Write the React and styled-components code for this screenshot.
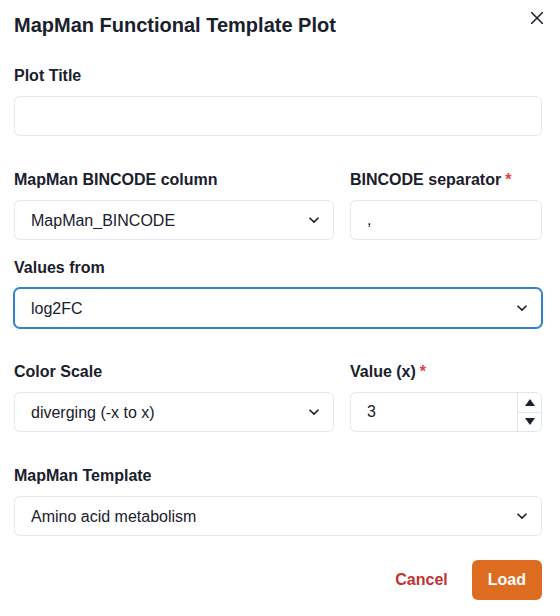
import styled, { createGlobalStyle } from "styled-components";

const GlobalStyle = createGlobalStyle`
  body {
    margin: 0;
    background: #ffffff;
    font-family: "Liberation Sans", Arial, sans-serif;
    color: #1a202c;
  }
  * { box-sizing: border-box; }
`

const Dialog = styled.div`
  position: relative;
  width: 560px;
  padding: 13px 18px 16px 14px;
  background: #ffffff;
`
const Title = styled.h2`
  margin: 0;
  font-size: 20px;
  line-height: 24px;
  font-weight: 700;
  color: #1a202c;
`
const CloseButton = styled.button`
  position: absolute;
  top: 2px;
  right: 7px;
  width: 32px;
  height: 32px;
  display: flex;
  align-items: center;
  justify-content: center;
  border: none;
  background: transparent;
  color: #1a202c;
  padding: 0;
  cursor: pointer;
`
const Form = styled.div`
  display: flex;
  flex-direction: column;
  margin-top: 27px;
`
const Field = styled.div`
  display: flex;
  flex-direction: column;
  margin-top: ${(p) => p.$mt || 0}px;
`
const Row = styled.div`
  display: grid;
  grid-template-columns: 5fr 3fr;
  gap: 16px;
  margin-top: ${(p) => p.$mt || 0}px;
`
const Label = styled.label`
  display: flex;
  font-size: 16px;
  line-height: 24px;
  font-weight: 700;
  margin-bottom: 8px;
  color: #1a202c;
`
const Required = styled.span`
  color: #e53e3e;
  margin-left: 4px;
`
const Input = styled.input`
  width: 100%;
  height: 40px;
  padding: 0 16px;
  border: 1px solid #e2e8f0;
  border-radius: 6px;
  font-family: inherit;
  font-size: 16px;
  color: #1a202c;
  background: #ffffff;
  outline: none;
`
const SelectWrap = styled.div`
  position: relative;
  width: 100%;
  height: 40px;
`
const Select = styled.select`
  appearance: none;
  width: 100%;
  height: 40px;
  padding: 0 32px 0 16px;
  border: 1px solid ${(p) => (p.$focused ? "#3182ce" : "#e2e8f0")};
  box-shadow: ${(p) => (p.$focused ? "0 0 0 1px #3182ce" : "none")};
  border-radius: 6px;
  font-family: inherit;
  font-size: 16px;
  color: #1a202c;
  background: #ffffff;
  outline: none;
`
const SelectIcon = styled.span`
  position: absolute;
  top: 10px;
  right: 10px;
  width: 20px;
  height: 20px;
  display: flex;
  pointer-events: none;
  color: #1a202c;
`
const NumberWrap = styled.div`
  position: relative;
  height: 40px;
`
const Stepper = styled.div`
  position: absolute;
  top: 1px;
  right: 1px;
  bottom: 1px;
  width: 24px;
  display: flex;
  flex-direction: column;
  border-left: 1px solid #e2e8f0;
`
const StepButton = styled.div`
  flex: 1;
  display: flex;
  align-items: center;
  justify-content: center;
  color: #1a202c;
  border-top: ${(p) => (p.$down ? "1px solid #e2e8f0" : "none")};
`
const Footer = styled.div`
  display: flex;
  justify-content: flex-end;
  gap: 8px;
  margin-top: 24px;
`
const Button = styled.button`
  height: 40px;
  padding: 0 16px;
  border: none;
  border-radius: 6px;
  font-family: inherit;
  font-size: 16px;
  font-weight: 700;
  cursor: pointer;
  color: ${(p) => (p.$primary ? "#ffffff" : "#c53030")};
  background: ${(p) => (p.$primary ? "#dd6b20" : "transparent")};
`

function Chevron() {
  return (
    <SelectIcon>
      <svg viewBox="0 0 24 24" width="20" height="20">
        <path fill="currentColor" d="M16.59 8.59L12 13.17 7.41 8.59 6 10l6 6 6-6z" />
      </svg>
    </SelectIcon>
  )
}

function Dropdown({ value, options, focused }) {
  return (
    <SelectWrap>
      <Select defaultValue={value} $focused={focused}>
        {options.map((o) => (
          <option key={o}>{o}</option>
        ))}
      </Select>
      <Chevron />
    </SelectWrap>
  )
}

export default function App() {
  return (
    <Dialog>
      <GlobalStyle />
      <Title>MapMan Functional Template Plot</Title>
      <CloseButton aria-label="Close">
        <svg viewBox="0 0 12 12" width="12" height="12">
          <path d="M0.5 0.5L11.5 11.5M11.5 0.5L0.5 11.5" stroke="currentColor" strokeWidth="1.5" strokeLinecap="round" />
        </svg>
      </CloseButton>
      <Form>
        <Field>
          <Label>Plot Title</Label>
          <Input type="text" />
        </Field>
        <Row $mt={32}>
          <Field>
            <Label>MapMan BINCODE column</Label>
            <Dropdown value="MapMan_BINCODE" options={["MapMan_BINCODE"]} />
          </Field>
          <Field>
            <Label>BINCODE separator<Required>*</Required></Label>
            <Input type="text" defaultValue="," />
          </Field>
        </Row>
        <Field $mt={16}>
          <Label>Values from</Label>
          <Dropdown value="log2FC" options={["log2FC"]} focused />
        </Field>
        <Row $mt={32}>
          <Field>
            <Label>Color Scale</Label>
            <Dropdown value="diverging (-x to x)" options={["diverging (-x to x)"]} />
          </Field>
          <Field>
            <Label>Value (x)<Required>*</Required></Label>
            <NumberWrap>
              <Input type="text" defaultValue="3" />
              <Stepper>
                <StepButton>
                  <svg viewBox="0 0 10 7" width="10" height="7">
                    <path d="M5 0L10 7H0Z" fill="currentColor" />
                  </svg>
                </StepButton>
                <StepButton $down>
                  <svg viewBox="0 0 10 7" width="10" height="7">
                    <path d="M0 0H10L5 7Z" fill="currentColor" />
                  </svg>
                </StepButton>
              </Stepper>
            </NumberWrap>
          </Field>
        </Row>
        <Field $mt={32}>
          <Label>MapMan Template</Label>
          <Dropdown value="Amino acid metabolism" options={["Amino acid metabolism"]} />
        </Field>
      </Form>
      <Footer>
        <Button>Cancel</Button>
        <Button $primary>Load</Button>
      </Footer>
    </Dialog>
  )
}
